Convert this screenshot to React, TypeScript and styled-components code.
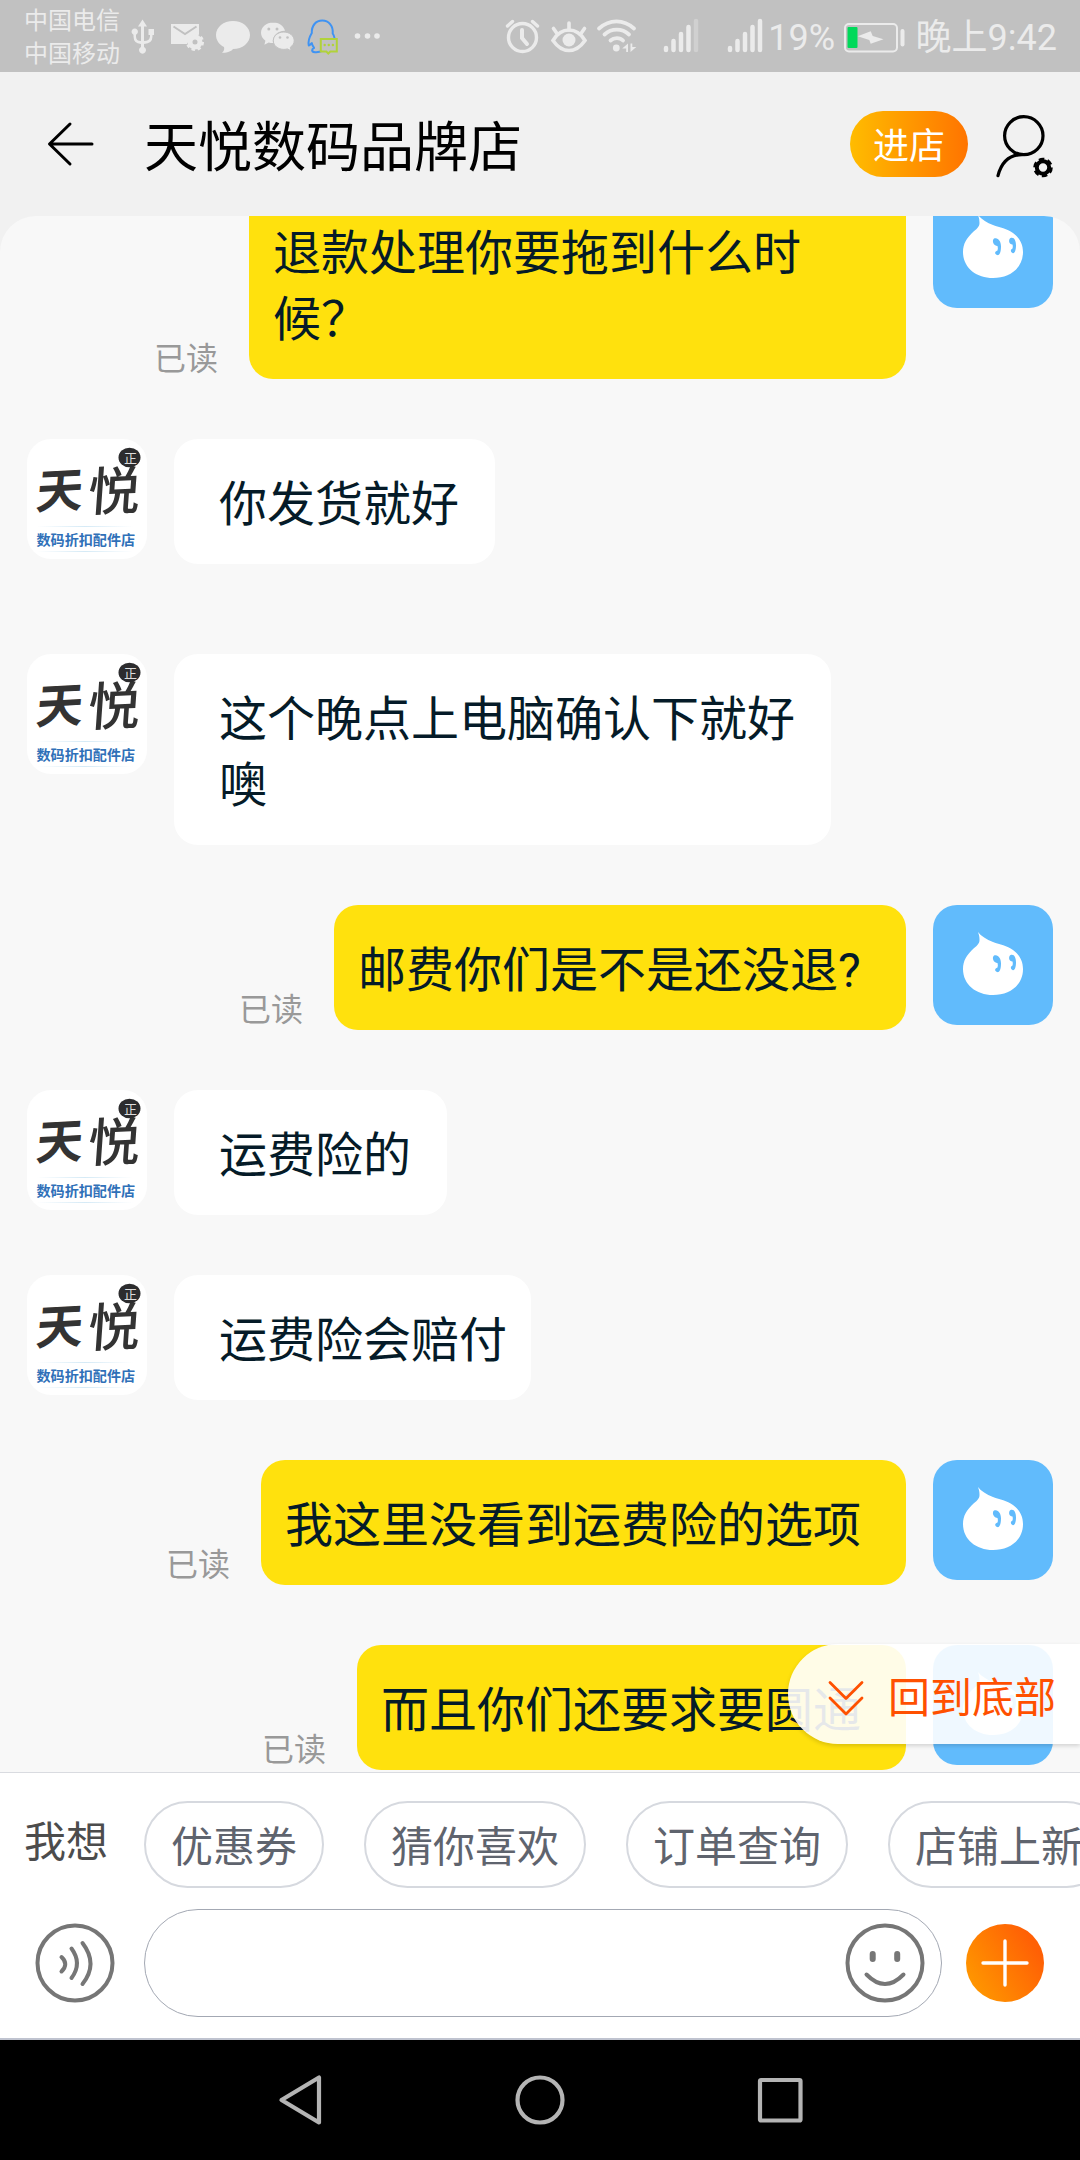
import React from 'react';
import styled, { createGlobalStyle } from 'styled-components';

const GlobalStyle = createGlobalStyle`
  * {
    box-sizing: border-box;
  }

  body {
    margin: 0;
    padding: 0;
    background-color: #f1f1f1;
    font-family: Roboto, 'Noto Sans CJK SC', sans-serif;
  }

  svg {
    display: block;
    flex: none;
  }
`;

const Phone = styled.div`
  display: flex;
  flex-direction: column;
  width: 1080px;
  height: 2160px;
  overflow: hidden;
  background: #f1f1f1;
`;

const StatusBar = styled.div`
  flex: none;
  display: flex;
  align-items: center;
  justify-content: space-between;
  height: 72px;
  padding: 0 23px 0 24px;
  background: #c1c1c1;
  color: #ebebeb;
`;

const Carriers = styled.div`
  width: 96px;
  font-size: 24px;
  line-height: 33px;
  white-space: nowrap;
  padding-top: 4px;
`;

const StatusGroup = styled.div`
  display: flex;
  align-items: center;
  height: 72px;
`;

const StatusText = styled.span<{ $left: number; $right?: number }>`
  margin: 0 ${props => props.$right || 0}px 0 ${props => props.$left}px;
  font-size: 36px;
  line-height: 72px;
  white-space: nowrap;
  padding-top: 4px;
`;

const Header = styled.header`
  flex: none;
  display: flex;
  align-items: center;
  height: 144px;
  padding: 0 24px 0 44px;
`;

const Title = styled.h1`
  flex: 1;
  margin: 0 0 0 48px;
  padding-top: 10px;
  font-size: 54px;
  font-weight: 400;
  line-height: 80px;
  color: #000;
`;

const ShopButton = styled.button`
  width: 118px;
  height: 66px;
  margin-right: 24px;
  padding: 6px 0 0;
  border: none;
  border-radius: 33px;
  background: linear-gradient(90deg, #ffbc00, #ff7400);
  color: #fff;
  font-family: inherit;
  font-size: 36px;
  line-height: 60px;
`;

const Chat = styled.main`
  position: relative;
  flex: none;
  display: flex;
  flex-direction: column;
  justify-content: flex-end;
  height: 1556px;
  padding: 0 27px 2px;
  border-radius: 36px 36px 0 0;
  background: #f8f8f8;
  overflow: hidden;
`;

const MessageRow = styled.div<{ $mine: boolean; $gap: number }>`
  flex: none;
  display: flex;
  flex-direction: ${props => (props.$mine ? 'row-reverse' : 'row')};
  align-items: flex-start;
  gap: 27px;
  margin-top: ${props => props.$gap}px;
`;

const Bubble = styled.div<{ $mine: boolean; $width: number }>`
  width: ${props => props.$width}px;
  padding: 33px 0 26px ${props => (props.$mine ? 24 : 45)}px;
  border-radius: 24px;
  background: ${props => (props.$mine ? '#ffe10d' : '#fff')};
  color: #051b28;
  font-size: 48px;
  line-height: 66px;
  white-space: pre-line;
`;

const ReadMark = styled.span`
  align-self: flex-end;
  margin-right: 4px;
  font-size: 32px;
  line-height: 39px;
  color: #999;
`;

const Avatar = styled.div<{ $bg: string }>`
  flex: none;
  width: 120px;
  height: 120px;
  border-radius: 24px;
  background: ${props => props.$bg};
  overflow: hidden;
`;

const BackToBottom = styled.button`
  position: absolute;
  right: 0;
  bottom: 28px;
  display: flex;
  align-items: center;
  width: 292px;
  height: 100px;
  padding: 0 0 0 39px;
  border: none;
  border-radius: 50px 0 0 50px;
  background: rgba(255, 255, 255, 0.9);
  box-shadow: 0 2px 4px rgba(0, 0, 0, 0.15);
  color: #ff5000;
  font-family: inherit;
  font-size: 42px;
  line-height: 60px;
  white-space: nowrap;

  svg {
    margin-top: 7px;
  }

  span {
    margin-left: 23px;
    padding-top: 9px;
  }
`;

const Footer = styled.footer`
  flex: none;
  height: 268px;
  border-top: 1px solid #d9dbe0;
  border-bottom: 2px solid #bfc3cf;
  background: #fff;
`;

const QuickRow = styled.div`
  display: flex;
  align-items: flex-start;
  height: 136px;
  padding: 28px 0 0 24px;
  overflow: hidden;
`;

const QuickLabel = styled.span`
  flex: none;
  width: 120px;
  padding-top: 12px;
  font-size: 42px;
  line-height: 60px;
  color: #4c4c4c;
`;

const Chip = styled.button`
  flex: none;
  height: 87px;
  margin-right: 40px;
  padding: 6px 25px 0;
  border: 2px solid #d6d9df;
  border-radius: 44px;
  background: #fff;
  color: #5f646e;
  font-family: inherit;
  font-size: 42px;
  line-height: 77px;
  white-space: nowrap;
`;

const InputRow = styled.div`
  display: flex;
  align-items: center;
  height: 108px;
  padding-left: 35px;
`;

const InputBox = styled.div`
  display: flex;
  align-items: center;
  justify-content: flex-end;
  width: 798px;
  height: 108px;
  margin: 0 23px 0 29px;
  padding-right: 16px;
  border: 1px solid #a3a8b3;
  border-radius: 54px;
`;

const NavBar = styled.nav`
  flex: none;
  display: flex;
  align-items: center;
  justify-content: center;
  gap: 180px;
  height: 120px;
  background: #000;
`;

const LightIcons = () => (
  <svg width="260" height="72" viewBox="120 0 260 72" fill="#ebebeb">
    {/* usb */}
    <path d="M142.500 19.500l4.500 7h-3v14.500q5.500 0 6-4.500v-1.500h-1.500v-6h5.500v6H152.500v1.500q0 7-8.500 7.500v3a3.500 3.500 0 1 1-3 0v-3q-7.500-.5-7.500-7.500v-1.800a3.200 3.200 0 1 1 2.500 0v1.800q0 4.500 5 4.500V26.500h-3z" />
    {/* mail with gear */}
    <path d="M171 24h28v10l-4 1-5 3-3 6h-16z" />
    <path d="M173.500 26.500l11.500 7.500 11.500-7.500" fill="none" stroke="#c1c1c1" strokeWidth="2" />
    <circle cx="195" cy="42" r="5" fill="none" stroke="#ebebeb" strokeWidth="5" />
    <circle cx="195" cy="42" r="7.800" fill="none" stroke="#ebebeb" strokeWidth="2.400" strokeDasharray="3.400 2.730" />
    {/* sms */}
    <path d="M233 21c9.500 0 17 6.200 17 14s-7.500 14-17 14c-1.500 2-5 4-11 3.800 2-1.500 2.500-3.500 2-5.800-5-2.500-8-7-8-12 0-7.800 7.500-14 17-14z" />
    {/* wechat */}
    <path d="M273 22.500c-6.600 0-12 4.600-12 10.300 0 3.200 1.700 6 4.400 7.900l-1 4 4.300-2.300c1.400.4 2.800.6 4.300.6-1-7.500 5-12.500 12-12.300-1.200-4.800-6-8.200-12-8.200z" />
    <path d="M283.800 32c-5.800 0-10.500 3.800-10.500 8.700s4.700 8.700 10.500 8.700c1.300 0 2.500-.2 3.600-.5l3.800 2-.9-3.600c2.300-1.600 3.900-3.900 3.900-6.600 0-4.900-4.700-8.700-10.400-8.700z" stroke="#c1c1c1" strokeWidth="1" />
    <g fill="#c1c1c1">
      <circle cx="268.800" cy="29" r="1.500" />
      <circle cx="277" cy="29" r="1.500" />
      <circle cx="280" cy="37.500" r="1.300" />
      <circle cx="287.500" cy="37.500" r="1.300" />
    </g>
    {/* qq */}
    <path d="M334.500 38c-.2-2-.9-3.200-1.800-4.500.6-8-4-12.900-10.400-12.900-6.500 0-10.800 4.900-10.500 12.500-1.800 3-4.200 7-3 12.500 1.500-.5 2.300-1.600 3-2.500.4 2 1.200 3.500 2.300 4.800-2.600 1.200-3 4 .8 4.300 3 .3 5.500-.3 8-1.500" fill="none" stroke="#3f93f3" strokeWidth="2" strokeLinejoin="round" />
    <path d="M320.800 39h16v12.500h-6.500l-2 2-2-2h-5.500z" fill="#c1c1c1" stroke="#b1d23a" strokeWidth="2" />
    <g fill="#b1d23a">
      <circle cx="324.700" cy="45" r="1.200" />
      <circle cx="328.800" cy="45" r="1.200" />
      <circle cx="332.900" cy="45" r="1.200" />
    </g>
    <circle cx="357.500" cy="36" r="2.800" />
    <circle cx="367.500" cy="36" r="2.800" />
    <circle cx="377" cy="36" r="2.800" />
  </svg>
);

const signalTops = [46, 39, 32, 25, 19];

const Signal = ({ x, level }: { x: number; level: number }) => (
  <g strokeWidth="4.500" strokeLinecap="round">
    {signalTops.map((top, i) => (
      <path
        key={top}
        d={`M${x + i * 7.500} ${top + 2}V50`}
        stroke={i < level ? '#ebebeb' : '#d0d0d0'}
      />
    ))}
  </g>
);

const SystemIcons = () => (
  <svg width="260" height="72" viewBox="504 0 260 72" fill="none" stroke="#ebebeb" strokeLinecap="round">
    {/* alarm */}
    <circle cx="522.500" cy="37.500" r="14" strokeWidth="3.400" />
    <path d="M522 30v8l5 6" strokeWidth="4" />
    <path d="M507.500 26l5-4.500M537.500 26l-5-4.500" strokeWidth="3.400" />
    {/* eye protection */}
    <path d="M553 40.500c4.500-7.500 10-10.500 16-10.500s11.500 3 16 10.500c-4.500 6.500-10 10-16 10s-11.500-3.500-16-10z" strokeWidth="3.600" />
    <circle cx="569" cy="40" r="6.500" fill="#ebebeb" stroke="none" />
    <path d="M569 23v7M553.500 28.500l3.500 5M584.500 28.500l-3.500 5" strokeWidth="3.600" />
    {/* wifi */}
    <path d="M599 28.500c10.500-9.500 24.500-9.500 35 0M604.500 34.500c7-6.500 17.500-6.500 24.500 0M610.500 40.500c3.500-3.200 9.500-3.200 12.500 0" strokeWidth="3.800" />
    <circle cx="616.300" cy="48" r="3.400" fill="#ebebeb" stroke="none" />
    <path d="M628 43.500v8.500h-1.800v-3.500h-4zM630.500 52v-8.500h1.800v3.500h4z" fill="#ebebeb" stroke="none" />
    <Signal x={666} level={4} />
    <Signal x={730} level={5} />
  </svg>
);

const Battery = () => (
  <svg width="62" height="72" viewBox="844 0 62 72">
    <rect x="845" y="24" width="52" height="27.500" rx="4" fill="none" stroke="#ebebeb" strokeWidth="2" />
    <rect x="847.500" y="27" width="10" height="21" rx="1" fill="#00d95a" />
    <path d="M857.700 36.300l13-5 2 4.700 10.800 3.200-12.800 4.600-1.400-3.900z" fill="#ebebeb" />
    <path d="M902.500 31v13.500" stroke="#ebebeb" strokeWidth="4" strokeLinecap="round" />
  </svg>
);

const BackIcon = () => (
  <svg width="52" height="48" viewBox="44 120 52 48" fill="none" stroke="#000" strokeWidth="3" strokeLinecap="round" strokeLinejoin="round">
    <path d="M92 144H50M70 124L49.500 144 70 164" />
  </svg>
);

const MemberIcon = () => (
  <svg width="64" height="72" viewBox="992 108 64 72" fill="none" stroke="#000">
    <ellipse cx="1023.800" cy="135.700" rx="19.200" ry="19" strokeWidth="3.200" />
    <path d="M1022 154.700c-12 0-20.500 7.500-24 21" strokeWidth="3.200" strokeLinecap="round" />
    <circle cx="1043" cy="167.500" r="6.200" strokeWidth="4" />
    <circle cx="1043" cy="167.500" r="8.300" strokeWidth="3" strokeDasharray="5.400 3.290" />
  </svg>
);

const ShopLogo = () => (
  <svg width="120" height="120" viewBox="0 0 120 120" fontFamily="'Noto Sans CJK SC', sans-serif">
    <defs>
      <linearGradient id="rule">
        <stop offset="0" stopColor="#b9dcf0" stopOpacity="0" />
        <stop offset="0.500" stopColor="#b9dcf0" stopOpacity="0.600" />
        <stop offset="1" stopColor="#b9dcf0" stopOpacity="0" />
      </linearGradient>
    </defs>
    <text transform="translate(8 70) rotate(-3) skewX(-8)" fontSize="47" fontWeight="700" fill="#333">天</text>
    <text transform="translate(60 72) rotate(-2) skewX(-6)" fontSize="52" fontWeight="500" fill="#333">悦</text>
    <ellipse cx="102.500" cy="18.500" rx="11" ry="9.800" fill="#2c2c2e" />
    <text x="97" y="24" fontSize="13" fill="#ddd">正</text>
    <rect x="10" y="87" width="96" height="1" fill="url(#rule)" />
    <text x="9.500" y="106.300" fontSize="14.100" fontWeight="700" fill="#2f70b8">数码折扣配件店</text>
    <rect x="10" y="112" width="96" height="1" fill="url(#rule)" />
  </svg>
);

const DropFace = () => (
  <svg width="120" height="120" viewBox="0 0 120 120">
    <path d="M45 27c3 4 8.500 7.500 15 10 7 2.500 14 3.500 20 8 6.500 4.500 10 11 10 19C90 80 77 90 60 90S30 79.500 30 64c0-8.500 4-14 9-19 4.500-4 7.500-6 7.500-10 0-3-.5-5.500-1.500-8z" fill="#fff" />
    <g fill="#61bbfc">
      <path d="M61 50.500c4-1.500 7 2.500 7 8s-1.500 9.500-4 8.500c-2.500-1-2.500-3.500.5-4.500.5-1.500.5-3 0-4.500-4 0-6-5.500-3.500-7.500z" />
      <path d="M77.500 50c3.500-1.500 5.500 2.500 5.500 7.500s-1.500 8.500-3.500 7.500-2.300-3.500 0-4.500c.4-1.500.4-2.500 0-4-3.500 0-4.500-4.500-2-6.500z" />
    </g>
  </svg>
);

const DoubleDown = () => (
  <svg width="38" height="38" viewBox="827 1679 38 38" fill="none" stroke="#ff5000" strokeWidth="2.800" strokeLinecap="round" strokeLinejoin="round">
    <path d="M830 1682.500l16 16 16-16M830 1698l16 16 16-16" />
  </svg>
);

const VoiceIcon = () => (
  <svg width="80" height="80" viewBox="35 1923 80 80" fill="none" stroke="#767676" strokeWidth="4" strokeLinecap="round">
    <circle cx="75" cy="1963" r="37.500" />
    <path d="M61.500 1957q7.500 7 0 14.500M71.500 1948.500q11 15 0 29.500M82.500 1943q16 21 0 41" />
  </svg>
);

const SmileIcon = () => (
  <svg width="80" height="80" viewBox="845 1923 80 80" fill="none" stroke="#767676" strokeWidth="4" strokeLinecap="round">
    <circle cx="885" cy="1963" r="37.500" />
    <path d="M872.700 1954v5M897.200 1954v5" strokeWidth="6" />
    <path d="M866.500 1974.500q18.500 19 37 0" />
  </svg>
);

const PlusIcon = () => (
  <svg width="80" height="80" viewBox="965 1923 80 80">
    <defs>
      <linearGradient id="plus" x1="0.100" y1="0.800" x2="0.900" y2="0.300">
        <stop offset="0" stopColor="#ff9500" />
        <stop offset="1" stopColor="#ff6005" />
      </linearGradient>
    </defs>
    <circle cx="1005" cy="1963" r="39" fill="url(#plus)" />
    <path d="M983 1963h44M1005 1941v44" stroke="#fff" strokeWidth="3.400" strokeLinecap="round" />
  </svg>
);

const NavIcon = ({ children }: { children: React.ReactNode }) => (
  <svg width="60" height="60" viewBox="0 0 60 60" fill="none" stroke="#b4b4b4" strokeWidth="4.200" strokeLinejoin="round">
    {children}
  </svg>
);

interface Message {
  text: string;
  mine: boolean;
  width: number;
  gap?: number;
}

const messages: Message[] = [
  { text: '退款处理你要拖到什么时\n候？', mine: true, width: 657 },
  { text: '你发货就好', mine: false, width: 321 },
  { text: '这个晚点上电脑确认下就好\n噢', mine: false, width: 657, gap: 90 },
  { text: '邮费你们是不是还没退?', mine: true, width: 572 },
  { text: '运费险的', mine: false, width: 273 },
  { text: '运费险会赔付', mine: false, width: 357 },
  { text: '我这里没看到运费险的选项', mine: true, width: 645 },
  { text: '而且你们还要求要圆通', mine: true, width: 549 },
];

const quickReplies = ['优惠券', '猜你喜欢', '订单查询', '店铺上新'];

const App: React.FC = () => {
  return (
    <>
      <GlobalStyle />
      <Phone>
        <StatusBar>
          <StatusGroup>
            <Carriers>
              中国电信
              <br />
              中国移动
            </Carriers>
            <LightIcons />
          </StatusGroup>
          <StatusGroup>
            <SystemIcons />
            <StatusText $left={4} $right={9}>19%</StatusText>
            <Battery />
            <StatusText $left={9.5}>晚上9:42</StatusText>
          </StatusGroup>
        </StatusBar>

        <Header>
          <BackIcon />
          <Title>天悦数码品牌店</Title>
          <ShopButton>进店</ShopButton>
          <MemberIcon />
        </Header>

        <Chat>
          {messages.map(({ text, mine, width, gap = 60 }) => (
            <MessageRow key={text} $mine={mine} $gap={gap}>
              <Avatar $bg={mine ? '#61bbfc' : '#fff'}>{mine ? <DropFace /> : <ShopLogo />}</Avatar>
              <Bubble $mine={mine} $width={width}>{text}</Bubble>
              {mine && <ReadMark>已读</ReadMark>}
            </MessageRow>
          ))}
          <BackToBottom>
            <DoubleDown />
            <span>回到底部</span>
          </BackToBottom>
        </Chat>

        <Footer>
          <QuickRow>
            <QuickLabel>我想</QuickLabel>
            {quickReplies.map(reply => (
              <Chip key={reply}>{reply}</Chip>
            ))}
          </QuickRow>
          <InputRow>
            <VoiceIcon />
            <InputBox>
              <SmileIcon />
            </InputBox>
            <PlusIcon />
          </InputRow>
        </Footer>

        <NavBar>
          <NavIcon>
            <path d="M49 7.500v45L11.500 30z" />
          </NavIcon>
          <NavIcon>
            <circle cx="30" cy="30" r="22.500" />
          </NavIcon>
          <NavIcon>
            <rect x="10" y="10" width="40.500" height="40.500" rx="1" />
          </NavIcon>
        </NavBar>
      </Phone>
    </>
  );
};

export default App;
